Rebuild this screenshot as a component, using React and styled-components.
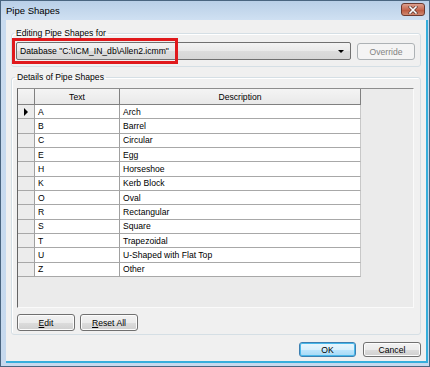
import styled, { createGlobalStyle } from "styled-components"

const Global = createGlobalStyle`
body{margin:0;background:#fff;font-family:"Liberation Sans",Arial,sans-serif;}
`

const shapes = [
  ["A", "Arch"],
  ["B", "Barrel"],
  ["C", "Circular"],
  ["E", "Egg"],
  ["H", "Horseshoe"],
  ["K", "Kerb Block"],
  ["O", "Oval"],
  ["R", "Rectangular"],
  ["S", "Square"],
  ["T", "Trapezoidal"],
  ["U", "U-Shaped with Flat Top"],
  ["Z", "Other"],
]

const Window = styled.div`
width:430px;
height:367px;
box-sizing:border-box;
display:flex;
flex-direction:column;
background:linear-gradient(#bfd4eb,#c9dbef 20px,#c6d9ee);
border:1px solid #4a6580;
`
const TitleBar = styled.div`
height:19px;
display:flex;
align-items:center;
justify-content:space-between;
padding:0 4px 0 5px;
background:linear-gradient(#b9cfe7,#cfe0f2);
`
const Title = styled.span`
font-size:9.5px;
color:#000;
`
const Close = styled.div`
width:24px;
height:13px;
box-sizing:border-box;
border:1px solid #6b3a30;
border-radius:3px;
background:linear-gradient(#dca08e,#c86a52 50%,#b9553c 51%,#d08870);
display:flex;
align-items:center;
justify-content:center;
margin-top:-2px;
`
const Client = styled.div`
flex:1;
margin:0 1px 3px 5px;
background:#f0f0f0;
border-right:2px solid #36aedb;
border-bottom:2px solid #36aedb;
padding:7px 5px 4px 5px;
display:flex;
flex-direction:column;
font-size:8.6px;
color:#000;
`
const Group = styled.fieldset`
margin:0;
margin-top:${p => p.$top || 0}px;
border:1px solid #d5dfe5;
border-radius:3px;
padding:${p => p.$pad};
min-width:0;
box-shadow:inset 1px 1px 0 #fff;
`
const Legend = styled.legend`
padding:0 2px;
margin-left:-2px;
line-height:12px;
height:12px;
font-size:8.6px;
color:#000;
`
const Row = styled.div`
display:flex;
align-items:flex-end;
gap:6px;
`
const ComboWrap = styled.div`
position:relative;
flex:1;
`
const Combo = styled.div`
height:18px;
box-sizing:border-box;
border:1px solid #707070;
border-radius:2px;
background:linear-gradient(#f3f3f3,#e9e9e9 50%,#dcdcdc 51%,#d6d6d6);
display:flex;
align-items:center;
justify-content:space-between;
padding:0 6px 0 3px;
font-size:8.6px;
`
const Arrow = styled.span`
width:0;
height:0;
border-left:3px solid transparent;
border-right:3px solid transparent;
border-top:3px solid #000;
`
const Highlight = styled.div`
position:absolute;
left:-4px;
top:-4px;
width:166px;
height:26px;
box-sizing:border-box;
border:3px solid #e0191c;
pointer-events:none;
`
const Button = styled.div`
width:${p => p.$w}px;
height:${p => p.$h || 17}px;
box-sizing:border-box;
border:1px solid ${p => (p.$disabled ? "#adb2b5" : p.$default ? "#3c7fb1" : "#707070")};
border-radius:3px;
background:${p =>
    p.$disabled
      ? "#f4f4f4"
      : p.$default
      ? "linear-gradient(#eaf6fd,#d9f0fc 50%,#bee6fd 51%,#a7d9f5)"
      : "linear-gradient(#f2f2f2,#ebebeb 50%,#dddddd 51%,#cfcfcf)"};
box-shadow:inset 0 0 0 1px ${p => (p.$disabled ? "#f4f4f4" : p.$default ? "#48b8ea" : "#fcfcfc")};
color:${p => (p.$disabled ? "#838383" : "#000")};
display:flex;
align-items:center;
justify-content:center;
font-size:8.6px;
`
const Grid = styled.div`
height:220px;
box-sizing:border-box;
border:1px solid;
border-color:#8d8d8d #fafafa #fafafa #646464;
background:#ebebeb;
font-size:8.6px;
`
const HeaderRow = styled.div`
display:flex;
height:16px;
`
const HeadCell = styled.div`
width:${p => p.$w}px;
box-sizing:border-box;
border-right:1px solid #808080;
border-bottom:1px solid #808080;
background:linear-gradient(#f4f4f4,#e9e9e9);
display:flex;
align-items:center;
justify-content:center;
`
const DataRow = styled.div`
display:flex;
height:14.33px;
`
const RowHead = styled.div`
width:17px;
box-sizing:border-box;
border-right:1px solid #a0a0a0;
border-bottom:1px solid #a8a8a8;
background:#ececec;
display:flex;
align-items:center;
padding-left:6px;
`
const Pointer = styled.span`
width:0;
height:0;
border-top:4px solid transparent;
border-bottom:4px solid transparent;
border-left:4px solid #000;
`
const Cell = styled.div`
width:${p => p.$w}px;
box-sizing:border-box;
border-right:1px solid ${p => p.$edge || "#a0a0a0"};
border-bottom:1px solid #a8a8a8;
background:#fff;
display:flex;
align-items:center;
padding-left:3px;
white-space:nowrap;
`
const Actions = styled.div`
display:flex;
gap:5px;
margin-top:6px;
`
const Footer = styled.div`
display:flex;
justify-content:flex-end;
gap:7px;
margin-top:7px;
`
const U = styled.span`
text-decoration:underline;
`

export default function App() {
  return (
    <>
      <Global />
      <Window>
        <TitleBar>
          <Title>Pipe Shapes</Title>
          <Close>
            <svg width="10" height="8" viewBox="0 0 10 8">
              <path d="M2 1 L8 7 M8 1 L2 7" stroke="#5a3a34" strokeWidth="3" strokeLinecap="square" />
              <path d="M2 1 L8 7 M8 1 L2 7" stroke="#fff" strokeWidth="1.6" strokeLinecap="square" />
            </svg>
          </Close>
        </TitleBar>
        <Client>
          <Group $pad="3px 5px 6px 4px">
            <Legend>Editing Pipe Shapes for</Legend>
            <Row>
              <ComboWrap>
                <Combo>
                  <span>Database "C:\ICM_IN_db\Allen2.icmm"</span>
                  <Arrow />
                </Combo>
                <Highlight />
              </ComboWrap>
              <Button $w={58} $disabled>Override</Button>
            </Row>
          </Group>
          <Group $top={4} $pad="5px 6px 3px 5px">
            <Legend>Details of Pipe Shapes</Legend>
            <Grid>
              <HeaderRow>
                <HeadCell $w={17} />
                <HeadCell $w={85}>Text</HeadCell>
                <HeadCell $w={241}>Description</HeadCell>
              </HeaderRow>
              {shapes.map(([code, desc], i) => (
                <DataRow key={code}>
                  <RowHead>{i === 0 && <Pointer />}</RowHead>
                  <Cell $w={85}>{code}</Cell>
                  <Cell $w={241} $edge="#c8c8c8">{desc}</Cell>
                </DataRow>
              ))}
            </Grid>
            <Actions>
              <Button $w={58}><span><U>E</U>dit</span></Button>
              <Button $w={58}><span><U>R</U>eset All</span></Button>
            </Actions>
          </Group>
          <Footer>
            <Button $w={57} $h={15} $default>OK</Button>
            <Button $w={58} $h={15}>Cancel</Button>
          </Footer>
        </Client>
      </Window>
    </>
  )
}
